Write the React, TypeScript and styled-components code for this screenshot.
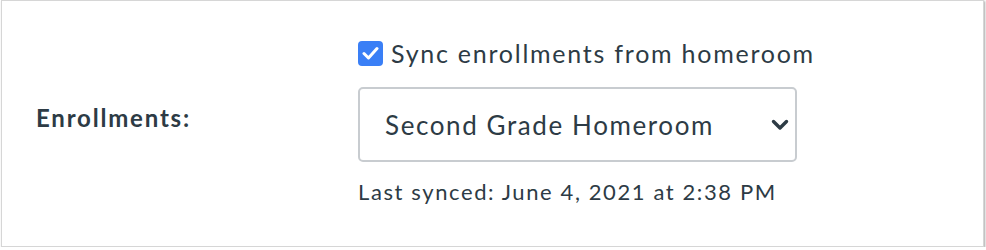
import React, { useState } from "react";
import styled, { createGlobalStyle } from "styled-components";

const GlobalStyle = createGlobalStyle`
  body {
    margin: 0;
    background: #ffffff;
    font-family: "Lato", "Noto Sans", sans-serif;
    color: #2d3b45;
  }
`;

const App = () => {
  const [synced, setSynced] = useState(true);

  return (
    <>
      <GlobalStyle />
      <SFrame>
        <SRow>
          <SLabel>Enrollments:</SLabel>
          <SControls>
            <SCheckRow onClick={() => setSynced(!synced)}>
              <SCheckBox checked={synced}>
                {synced && (
                  <svg width="17" height="14" viewBox="0 0 17 14">
                    <path
                      d="M2 7.5 L6.5 12 L15 2.5"
                      fill="none"
                      stroke="#ffffff"
                      strokeWidth="3"
                      strokeLinecap="round"
                      strokeLinejoin="round"
                    />
                  </svg>
                )}
              </SCheckBox>
              <SCheckText>Sync enrollments from homeroom</SCheckText>
            </SCheckRow>
            <SSelect>
              <span>Second Grade Homeroom</span>
              <svg width="18" height="12" viewBox="0 0 18 12">
                <path
                  d="M2.5 2.5 L9 9 L15.5 2.5"
                  fill="none"
                  stroke="#2d3b45"
                  strokeWidth="3.4"
                  strokeLinecap="round"
                  strokeLinejoin="round"
                />
              </svg>
            </SSelect>
            <SSynced>Last synced: June 4, 2021 at 2:38 PM</SSynced>
          </SControls>
        </SRow>
      </SFrame>
    </>
  );
};

export default App;

const SFrame = styled.div`
  box-sizing: border-box;
  margin-left: 1px;
  width: 983px;
  height: 247px;
  border: 1px solid #d6d6d6;
  box-shadow: 1px 1px 2px rgba(0, 0, 0, 0.35);
  background: #ffffff;
  padding-top: 38px;
`;

const SRow = styled.div`
  display: grid;
  grid-template-columns: 356px auto;
  align-items: center;
`;

const SLabel = styled.div`
  padding-left: 34px;
  font-size: 24px;
  font-weight: 700;
  letter-spacing: 1.8px;
  margin-top: -9px;
`;

const SControls = styled.div`
  display: flex;
  flex-direction: column;
  align-items: flex-start;
`;

const SCheckRow = styled.label`
  display: flex;
  align-items: center;
  gap: 8px;
  cursor: pointer;
  height: 28px;
`;

const SCheckBox = styled.span<{ checked: boolean }>`
  box-sizing: border-box;
  width: 25px;
  height: 25px;
  border-radius: 4px;
  display: flex;
  align-items: center;
  justify-content: center;
  background: ${(p) => (p.checked ? "#3a7ff6" : "#ffffff")};
  border: ${(p) => (p.checked ? "none" : "1px solid #8d959f")};
`;

const SCheckText = styled.span`
  font-size: 25px;
  letter-spacing: 1.75px;
`;

const SSelect = styled.div`
  box-sizing: border-box;
  margin-top: 20px;
  width: 439px;
  height: 75px;
  border: 2px solid #c8ccd0;
  border-radius: 5px;
  display: flex;
  align-items: center;
  justify-content: space-between;
  padding: 0 6px 0 25px;
  font-size: 26px;
  letter-spacing: 1.6px;
`;

const SSynced = styled.div`
  margin-top: 16px;
  font-size: 22px;
  letter-spacing: 1.6px;
`;
